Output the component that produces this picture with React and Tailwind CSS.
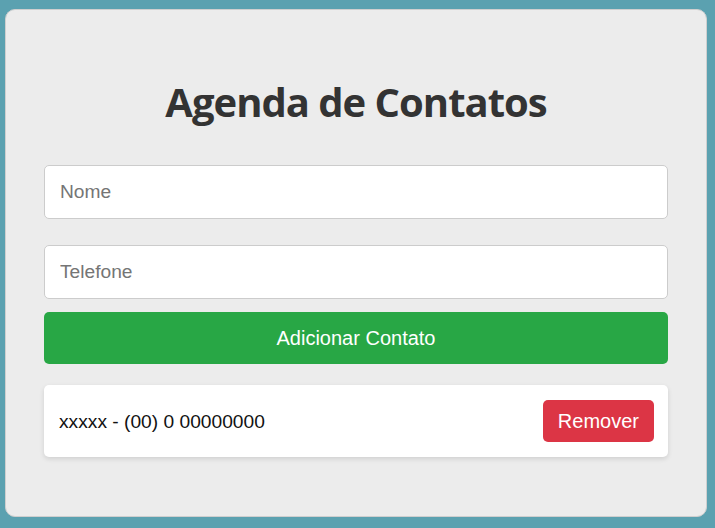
import React, { useState } from "react";

export default function App() {
  const [nome, setNome] = useState("");
  const [telefone, setTelefone] = useState("");
  const [contatos, setContatos] = useState([{ nome: "xxxxx", telefone: "(00) 0 00000000" }]);

  const adicionar = () => {
    if (!nome || !telefone) return;
    setContatos([...contatos, { nome, telefone }]);
    setNome("");
    setTelefone("");
  };

  return (
    <div className="min-h-screen h-[528px] bg-[#5ba1b0] pt-[9px] pl-[5px] font-['Liberation_Sans',Arial,sans-serif]">
      <div className="w-[702px] h-[508px] rounded-[10px] border border-[#cfcfcf] bg-[#ececec] px-[38px] flex flex-col">
        <h1 className="mt-[69px] mb-[40px] h-[46px] leading-[46px] text-center text-[40px] font-bold tracking-[-1px] text-[#333] font-['Open_Sans',sans-serif]">
          Agenda de Contatos
        </h1>
        <input
          value={nome}
          onChange={e => setNome(e.target.value)}
          placeholder="Nome"
          className="h-[54px] w-full rounded-[5px] border border-[#ccc] bg-white px-[15px] text-[19.2px] text-[#222] placeholder:text-[#757575] outline-none"
        />
        <input
          value={telefone}
          onChange={e => setTelefone(e.target.value)}
          placeholder="Telefone"
          className="mt-[26px] h-[54px] w-full rounded-[5px] border border-[#ccc] bg-white px-[15px] text-[19.2px] text-[#222] placeholder:text-[#757575] outline-none"
        />
        <button
          onClick={adicionar}
          className="mt-[13px] h-[52px] w-full rounded-[5px] bg-[#28a745] text-[20px] text-white"
        >
          Adicionar Contato
        </button>
        <div className="mt-[21px] flex flex-col gap-[10px]">
          {contatos.map((c, i) => (
            <div
              key={i}
              className="h-[72px] flex items-center justify-between rounded-[5px] bg-white pl-[15px] pr-[14px] shadow-[0_2px_5px_rgba(0,0,0,0.12)]"
            >
              <span className="pt-[2px] text-[19.2px] text-[#111]">{c.nome} - {c.telefone}</span>
              <button
                onClick={() => setContatos(contatos.filter((_, j) => j !== i))}
                className="h-[42px] px-[15px] rounded-[5px] bg-[#dc3545] text-[20px] text-white"
              >
                Remover
              </button>
            </div>
          ))}
        </div>
      </div>
    </div>
  );
}
